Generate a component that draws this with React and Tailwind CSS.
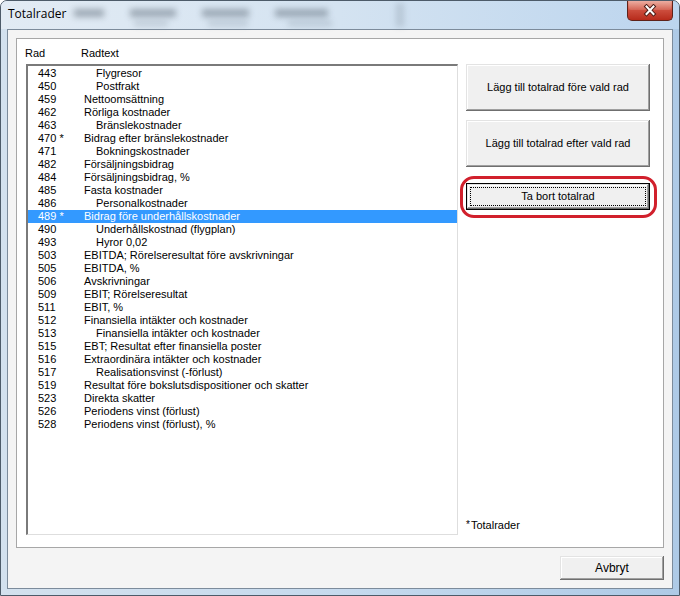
import React from "react";

const rows = [
  ["443", "Flygresor", 1],
  ["450", "Postfrakt", 1],
  ["459", "Nettoomsättning", 0],
  ["462", "Rörliga kostnader", 0],
  ["463", "Bränslekostnader", 1],
  ["470 *", "Bidrag efter bränslekostnader", 0],
  ["471", "Bokningskostnader", 1],
  ["482", "Försäljningsbidrag", 0],
  ["484", "Försäljningsbidrag, %", 0],
  ["485", "Fasta kostnader", 0],
  ["486", "Personalkostnader", 1],
  ["489 *", "Bidrag före underhållskostnader", 0, true],
  ["490", "Underhållskostnad (flygplan)", 1],
  ["493", "Hyror 0,02", 1],
  ["503", "EBITDA; Rörelseresultat före avskrivningar", 0],
  ["505", "EBITDA, %", 0],
  ["506", "Avskrivningar", 0],
  ["509", "EBIT; Rörelseresultat", 0],
  ["511", "EBIT, %", 0],
  ["512", "Finansiella intäkter och kostnader", 0],
  ["513", "Finansiella intäkter och kostnader", 1],
  ["515", "EBT; Resultat efter finansiella poster", 0],
  ["516", "Extraordinära intäkter och kostnader", 0],
  ["517", "Realisationsvinst (-förlust)", 1],
  ["519", "Resultat före bokslutsdispositioner och skatter", 0],
  ["523", "Direkta skatter", 0],
  ["526", "Periodens vinst (förlust)", 0],
  ["528", "Periodens vinst (förlust), %", 0],
];

const btn3d =
  "bg-[#f0f0f0] shadow-[inset_-1px_-1px_0_#6f6f6f,inset_1px_1px_0_#e3e3e3,inset_-2px_-2px_0_#a0a0a0,inset_2px_2px_0_#ffffff]";

function CloseButton() {
  return (
    <div className="relative w-[46px] h-[20px] self-start rounded-b-[5px] border border-t-0 border-[#5e2219] bg-gradient-to-b from-[#e79a8c] via-[#cc4c3c] to-[#b72a1a] flex items-center justify-center">
      <div className="absolute left-[1px] right-[1px] top-0 h-[9px] rounded-b-[2px] bg-gradient-to-b from-[#f0c0b6] to-[#d97868] opacity-50" />
      <svg width="14" height="13" viewBox="0 0 14 13" className="relative">
        <path d="M3.5 2.5 L10.5 10 M10.5 2.5 L3.5 10" stroke="#4a1c16" strokeWidth="4" strokeLinecap="square" />
        <path d="M3.5 2.5 L10.5 10 M10.5 2.5 L3.5 10" stroke="#ffffff" strokeWidth="2" strokeLinecap="square" />
      </svg>
    </div>
  );
}

function Blob({ w, o = "opacity-50", h = "h-[8px]" }) {
  return <div className={`${h} ${o} bg-[#5e6b78] blur-[3px]`} style={{ width: w }} />;
}

export default function App() {
  return (
    <div className="w-[680px] h-[596px] flex flex-col rounded-t-[7px] border border-[#4d5b69] bg-gradient-to-r from-[#d3e1ee] via-[#c6daee] to-[#aecae6] overflow-hidden font-['Liberation_Sans',Arial,sans-serif] text-black">
      {/* title bar */}
      <div className="h-[28px] flex shrink-0 bg-gradient-to-r from-[#e2ebf4] via-[#d4e3f1] to-[#bcd5ee]">
        <div className="pl-[7px] pt-[5px] text-[12px] leading-[16px] font-['Open_Sans',sans-serif] text-black">Totalrader</div>
        <div className="flex flex-col gap-[4px] pt-[8px] pl-[8px]">
          <div className="flex gap-[26px]">
            <Blob w={30} />
            <Blob w={46} />
            <Blob w={47} />
            <Blob w={53} />
          </div>
          <div className="flex gap-[40px] pl-[60px]">
            <Blob w={34} o="opacity-25" h="h-[5px]" />
            <Blob w={40} o="opacity-25" h="h-[5px]" />
            <Blob w={44} o="opacity-25" h="h-[5px]" />
          </div>
        </div>
        <div className="pl-[64px] pt-[2px]">
          <div className="w-[8px] h-[24px] bg-[#7d8a97] opacity-30 blur-[3px]" />
        </div>
        <div className="flex-1" />
        <div className="mr-[6px]">
          <CloseButton />
        </div>
      </div>

      {/* client */}
      <div className="mx-[6px] flex-1 border border-[#7c8b9b] bg-[#f4f4f4] p-[8px] flex flex-col gap-[8px]">
        <div className="flex-1 border border-[#a7a7a7] bg-white flex gap-[8px] pl-[9px] pt-[8px] pb-[12px]">
          {/* left column */}
          <div className="w-[432px] flex flex-col">
            <div className="h-[13px] mb-[4px] flex text-[11px] leading-[13px] -ml-[1px]">
              <span className="w-[56px]">Rad</span>
              <span>Radtext</span>
            </div>
            <div className="flex-1 border-t-2 border-l-2 border-t-[#7a7a7a] border-l-[#7a7a7a] border-r border-b border-r-[#dedede] border-b-[#dedede] bg-white pt-[1px]">
              {rows.map(([num, text, ind, sel], i) => (
                <div
                  key={i}
                  className={`h-[13px] flex pl-[10px] text-[11px] leading-[13px] whitespace-nowrap ${sel ? "bg-[#3399ff] text-white" : ""}`}
                >
                  <span className="w-[46px]">{num}</span>
                  <span className={ind ? "pl-[12px]" : ""}>{text}</span>
                </div>
              ))}
            </div>
          </div>

          {/* right column */}
          <div className="w-[184px] pt-[17px] flex flex-col text-[11px]">
            <div className={`h-[47px] flex items-center justify-center ${btn3d}`}>Lägg till totalrad före vald rad</div>
            <div className={`h-[47px] mt-[9px] flex items-center justify-center ${btn3d}`}>Lägg till totalrad efter vald rad</div>
            <div className="relative mt-[16px]">
              <div className="absolute -left-[6px] -right-[7px] -top-[7px] -bottom-[8px] rounded-[14px] border-[3px] border-[#d1202c]" />
              <div className={`h-[27px] border border-black p-[3px] ${btn3d}`}>
                <div className="h-full border border-dotted border-black flex items-center justify-center">Ta bort totalrad</div>
              </div>
            </div>
            <div className="flex-1" />
            <div className="h-[13px] leading-[13px] mb-[3px] flex items-center">
              <span className="mr-[1px] text-[10px] -mt-[2px]">*</span>
              <span>Totalrader</span>
            </div>
          </div>
        </div>

        <div className="flex justify-end">
          <div className={`w-[104px] h-[24px] flex items-center justify-center text-[12px] ${btn3d}`}>Avbryt</div>
        </div>
      </div>
      <div className="h-[6px] shrink-0" />
    </div>
  );
}
